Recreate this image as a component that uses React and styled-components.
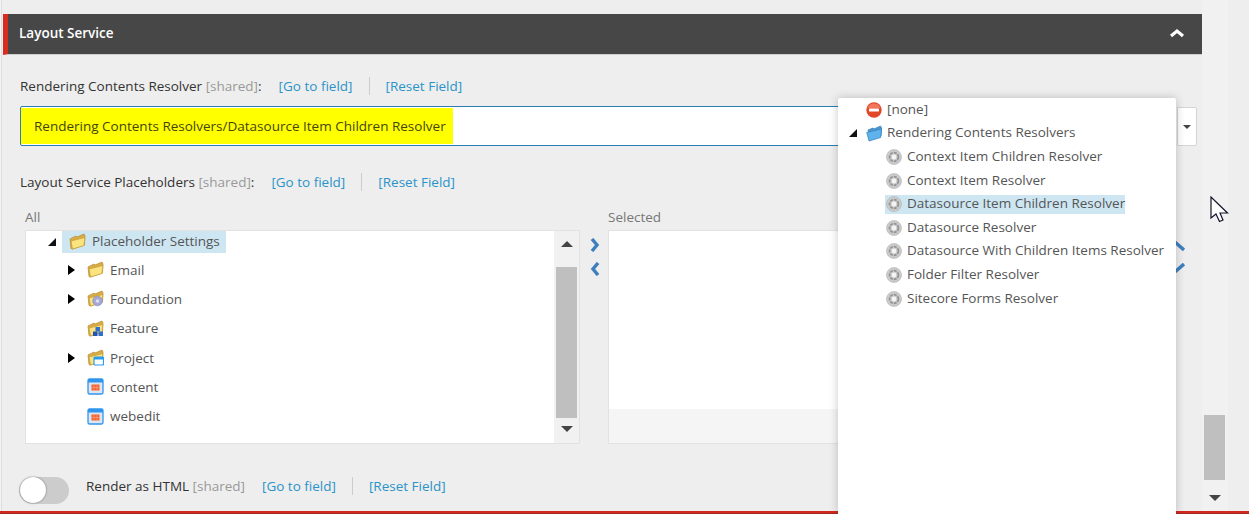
import React from "react";
import styled, { createGlobalStyle } from "styled-components";

const Global = createGlobalStyle`
  html, body { margin: 0; padding: 0; background: #eeeeee; }
  body { font-family: "Open Sans", "Liberation Sans", sans-serif; font-size: 13.5px; color: #333; }
`;

//layout
const Page = styled.div`
  position: relative;
  width: 1249px;
  height: 514px;
  overflow: hidden;
  background: #eeeeee;
  display: flex;
  flex-direction: column;
`;

const Main = styled.div`
  display: flex;
  height: 511px;
  flex-shrink: 0;
`;

const Gutter = styled.div`
  width: 2px;
  margin-right: 1px;
  background: #f3f3f3;
  border-right: 1px solid #dedede;
  box-sizing: border-box;
  flex-shrink: 0;
`;

const Panel = styled.div`
  width: 1199px;
  padding-top: 14px;
  flex-shrink: 0;
`;

const RedLine = styled.div`
  height: 3px;
  background: #d0281e;
  border-bottom: 1px solid #a92a22;
  box-sizing: border-box;
  flex-shrink: 0;
`;

//header
const Header = styled.div`
  height: 41px;
  box-sizing: border-box;
  background: #474747;
  border-left: 5px solid #d92c20;
  border-bottom: 1px solid #cfcfcf;
  padding: 0 17px 3px 11px;
  display: flex;
  align-items: center;
  justify-content: space-between;
`;

const Title = styled.div`
  color: #fff;
  font-weight: 600;
  font-size: 13.5px;
`;

const Body = styled.div`
  padding: 19px 5px 0 17px;
`;

//field rows
const FieldRow = styled.div`
  display: flex;
  align-items: center;
  height: 24px;
  margin-top: ${(p) => p.$top || 0}px;
`;

const Shared = styled.span`
  color: #999;
`;

const Label = styled.div`
  color: #333;
  white-space: nowrap;
  margin-right: 17px;
`;

const FieldLink = styled.a`
  color: #2a93c9;
  white-space: nowrap;
  cursor: pointer;
`;

const Divider = styled.span`
  width: 1px;
  height: 18px;
  background: #cccccc;
  margin: 0 16px;
`;

//select
const SelectRow = styled.div`
  display: flex;
  height: 40px;
  margin-top: 8px;
`;

const SelectInput = styled.div`
  width: 1156px;
  box-sizing: border-box;
  border: 1px solid #2b7db3;
  border-radius: 2px;
  background: #fff;
  padding: 1px 0 1px 0;
  display: flex;
`;

const Marked = styled.div`
  width: 432px;
  box-sizing: border-box;
  background: #ffff00;
  padding-left: 13px;
  line-height: 36px;
  color: #44440c;
  white-space: nowrap;
`;

const SelectButton = styled.div`
  width: 20px;
  margin: 1px 0 0 1px;
  box-sizing: border-box;
  border: 1px solid #d4d4d4;
  border-radius: 0 2px 2px 0;
  background: #fff;
  display: flex;
  align-items: center;
  justify-content: center;
`;

const Triangle = styled.span`
  display: block;
  flex-shrink: 0;
  width: 0;
  height: 0;
  border-left: ${(p) => p.$size}px solid transparent;
  border-right: ${(p) => p.$size}px solid transparent;
  ${(p) => (p.$up ? "border-bottom" : "border-top")}: ${(p) => p.$height}px solid ${(p) => p.$color || "#444"};
`;

//lists
const ListLabels = styled.div`
  display: flex;
  height: 20px;
  margin-top: 14px;
  margin-bottom: 2px;
  padding-left: 5px;
  color: #777;
`;

const AllLabel = styled.div`
  width: 583px;
`;

const Lists = styled.div`
  display: flex;
  height: 214px;
  padding-left: 5px;
`;

const ListBox = styled.div`
  width: 555px;
  box-sizing: border-box;
  border: 1px solid #e2e2e2;
  background: #fff;
  display: flex;
  justify-content: space-between;
`;

const Tree = styled.div`
  padding: 0 0 0 22px;
  color: #555;
`;

const ChildNodes = styled.div`
  padding: 2px 0 0 18px;
`;

const RootNode = styled.div`
  display: flex;
  align-items: center;
  height: 22px;
`;

const Node = styled.div`
  display: flex;
  align-items: center;
  height: 29.3px;
  white-space: nowrap;
`;

const Toggle = styled.span`
  width: ${(p) => p.$width}px;
  display: flex;
  flex-shrink: 0;
`;

const Expand = styled.span`
  display: block;
  margin-left: 2px;
  width: 0;
  height: 0;
  border-top: 5px solid transparent;
  border-bottom: 5px solid transparent;
  border-left: 7px solid #000;
`;

const Collapse = styled.span`
  display: block;
  width: 0;
  height: 0;
  border-left: 8px solid transparent;
  border-bottom: 8px solid #111;
`;

const Highlight = styled.div`
  display: flex;
  align-items: center;
  gap: 6px;
  height: 100%;
  box-sizing: border-box;
  background: #cde6f2;
  padding: 0 6px 2px 7px;
`;

const NodeText = styled.span`
  margin-left: 6px;
`;

const ListScroll = styled.div`
  width: 25px;
  background: #f1f1f1;
  display: flex;
  flex-direction: column;
  align-items: center;
  padding-top: 10px;
  box-sizing: border-box;
`;

const ListThumb = styled.div`
  width: 21px;
  height: 151px;
  margin: 20px 0 8px;
  background: #bfbfbf;
`;

const Shuttle = styled.div`
  width: 28px;
  display: flex;
  flex-direction: column;
  gap: 10px;
  padding-top: 8px;
  padding-left: 10px;
  box-sizing: border-box;
  flex-shrink: 0;
`;

const SelectedBox = styled.div`
  width: 557px;
  box-sizing: border-box;
  border: 1px solid #e2e2e2;
  background: #f5f5f5;
  flex-shrink: 0;
`;

const SelectedArea = styled.div`
  height: 178px;
  background: #fff;
`;

const OrderButtons = styled.div`
  display: flex;
  flex-direction: column;
  gap: 12px;
  padding: 11px 0 0 2px;
`;

//toggle row
const SwitchRow = styled.div`
  display: flex;
  align-items: flex-start;
  height: 27px;
  margin-top: 33px;
`;

const SwitchTrack = styled.div`
  width: 50px;
  height: 27px;
  margin-left: -1px;
  border-radius: 14px;
  background: #cccccc;
  margin-right: 17px;
  display: flex;
  align-items: flex-start;
`;

const SwitchKnob = styled.div`
  width: 26px;
  height: 26px;
  margin-left: 1px;
  border-radius: 50%;
  background: #fff;
  box-shadow: 0 0 2px rgba(0, 0, 0, 0.5);
`;

//page scrollbar
const PageScroll = styled.div`
  width: 26px;
  background: #f1f1f1;
  display: flex;
  flex-direction: column;
  align-items: center;
  justify-content: flex-end;
  padding: 0 1px 10px 0;
  box-sizing: border-box;
  flex-shrink: 0;
`;

const PageThumb = styled.div`
  width: 21px;
  height: 65px;
  background: #bfbfbf;
  margin-bottom: 15px;
`;

//dropdown
const Dropdown = styled.div`
  position: absolute;
  left: 838px;
  top: 98px;
  width: 338px;
  height: 416px;
  box-sizing: border-box;
  background: #fff;
  border-radius: 2px 2px 0 0;
  box-shadow: 0 0 10px rgba(0, 0, 0, 0.22);
  padding-left: 11px;
  color: #555;
`;

const DropRow = styled.div`
  display: flex;
  align-items: center;
  height: 23.6px;
  padding-left: ${(p) => p.$indent}px;
  white-space: nowrap;
`;

const DropText = styled.span`
  margin-left: 5px;
  padding-bottom: 2px;
`;

const DropActive = styled.div`
  display: flex;
  align-items: center;
  height: 19px;
  background: #cde6f2;
  margin-left: -1px;
  padding-left: 1px;
`;

const Cursor = styled.svg`
  position: absolute;
  left: 1210px;
  top: 196px;
`;

//icons
const Icon = styled.svg`
  display: block;
  flex-shrink: 0;
`;

const FolderBase = ({ children }) => (
  <Icon width="17" height="17" viewBox="0 0 17 17">
    <path d="M1 6 L7 3 L8 4 L15 1 L16 3 L15.5 12 L3.5 16 L2 15.5 Z" fill="#d9ad45" stroke="#b58a2c" strokeWidth=".7" />
    <path d="M2 8 L15.8 4.5 L15 12.5 L3.5 16 Z" fill="#fbe37f" stroke="#c69c38" strokeWidth=".7" />
    {children}
  </Icon>
);

const GearFolder = () => (
  <FolderBase>
    <circle cx="10.5" cy="11" r="4.8" fill="#a5a8d4" stroke="#8588b5" strokeWidth=".6" />
    <circle cx="10.5" cy="11" r="1.8" fill="#dcdef0" />
  </FolderBase>
);

const BlocksFolder = () => (
  <FolderBase>
    <rect x="8.5" y="7" width="4.5" height="4.5" fill="#2f6fd0" />
    <rect x="6" y="11.5" width="4.5" height="4.5" fill="#1d56b5" />
    <rect x="11.5" y="11.5" width="4.5" height="4.5" fill="#2f6fd0" />
  </FolderBase>
);

const WindowFolder = () => (
  <FolderBase>
    <rect x="7" y="8" width="9.5" height="8" rx="1" fill="#fff" stroke="#2b9cf0" strokeWidth="1.2" />
    <rect x="7" y="8" width="9.5" height="2.5" fill="#2b9cf0" />
  </FolderBase>
);

const GridPage = () => (
  <Icon width="17" height="17" viewBox="0 0 17 17">
    <rect x="1" y="1" width="15" height="15" rx="1.5" fill="#dde6f0" stroke="#2f95ee" strokeWidth="1.3" />
    <rect x="1" y="1" width="15" height="3.5" fill="#2f95ee" />
    <rect x="4.5" y="6.5" width="8" height="6" fill="#f2622e" />
    <path d="M7 6.5 V12.5 M10 6.5 V12.5 M4.5 9.5 H12.5" stroke="#f9a98a" strokeWidth=".6" />
  </Icon>
);

const NoneIcon = () => (
  <Icon width="16" height="16" viewBox="0 0 16 16">
    <circle cx="8" cy="8" r="7.7" fill="#e3472a" />
    <path d="M1.5 6 A7 7 0 0 1 14.5 6 Z" fill="#f0785a" />
    <rect x="3" y="6.4" width="10" height="3.2" rx=".6" fill="#fff" />
  </Icon>
);

const BlueFolder = () => (
  <Icon width="16" height="17" viewBox="0 0 16 17">
    <path d="M2 5 L7 3 L8 4 L14.5 1 L15.5 3 L15 11 L4 15 Z" fill="#4d97cf" stroke="#2f78b5" strokeWidth=".7" />
    <path d="M0.7 7.5 L15.5 4 L14.7 12.5 L3 16 Z" fill="#5fb3ea" stroke="#2e82c4" strokeWidth=".7" />
  </Icon>
);

const GearIcon = () => (
  <Icon width="16" height="16" viewBox="0 0 16 16">
    <circle cx="8" cy="8" r="7.5" fill="#cbcbcb" stroke="#b0b0b0" strokeWidth=".6" />
    <circle cx="8" cy="8" r="4.4" fill="none" stroke="#949494" strokeWidth="1.8" strokeDasharray="3 1" />
    <circle cx="8" cy="8" r="2.4" fill="#f4f4f4" />
  </Icon>
);

const Chevron = ({ d, width = 10, height = 14 }) => (
  <Icon width={width} height={height} viewBox={`0 0 ${width} ${height}`}>
    <path d={d} fill="none" stroke="#3f7fbd" strokeWidth="3.4" />
  </Icon>
);

const CollapseIcon = () => (
  <Icon width="16" height="10" viewBox="0 0 16 10">
    <path d="M2 8 L8 3 L14 8" fill="none" stroke="#fff" strokeWidth="3.2" />
  </Icon>
);

const treeItems = [
  { name: "Email", icon: <FolderBase />, open: true },
  { name: "Foundation", icon: <GearFolder />, open: true },
  { name: "Feature", icon: <BlocksFolder /> },
  { name: "Project", icon: <WindowFolder />, open: true },
  { name: "content", icon: <GridPage /> },
  { name: "webedit", icon: <GridPage /> },
];

const resolvers = [
  "Context Item Children Resolver",
  "Context Item Resolver",
  "Datasource Item Children Resolver",
  "Datasource Resolver",
  "Datasource With Children Items Resolver",
  "Folder Filter Resolver",
  "Sitecore Forms Resolver",
];

const FieldLinks = () => (
  <>
    <FieldLink>[Go to field]</FieldLink>
    <Divider />
    <FieldLink>[Reset Field]</FieldLink>
  </>
);

export default function App() {
  return (
    <Page>
      <Global />
      <Main>
        <Gutter />
        <Panel>
          <Header>
            <Title>Layout Service</Title>
            <CollapseIcon />
          </Header>
          <Body>
            <FieldRow>
              <Label>
                Rendering Contents Resolver <Shared>[shared]</Shared>:
              </Label>
              <FieldLinks />
            </FieldRow>
            <SelectRow>
              <SelectInput>
                <Marked>Rendering Contents Resolvers/Datasource Item Children Resolver</Marked>
              </SelectInput>
              <SelectButton>
                <Triangle $size={4} $height={4} />
              </SelectButton>
            </SelectRow>
            <FieldRow $top={24}>
              <Label>
                Layout Service Placeholders <Shared>[shared]</Shared>:
              </Label>
              <FieldLinks />
            </FieldRow>
            <ListLabels>
              <AllLabel>All</AllLabel>
              <div>Selected</div>
            </ListLabels>
            <Lists>
              <ListBox>
                <Tree>
                  <RootNode>
                    <Toggle $width={14}>
                      <Collapse />
                    </Toggle>
                    <Highlight>
                      <FolderBase />
                      Placeholder Settings
                    </Highlight>
                  </RootNode>
                  <ChildNodes>
                    {treeItems.map((item) => (
                      <Node key={item.name}>
                        <Toggle $width={21}>{item.open && <Expand />}</Toggle>
                        {item.icon}
                        <NodeText>{item.name}</NodeText>
                      </Node>
                    ))}
                  </ChildNodes>
                </Tree>
                <ListScroll>
                  <Triangle $up $size={6} $height={6} />
                  <ListThumb />
                  <Triangle $size={6} $height={6} />
                </ListScroll>
              </ListBox>
              <Shuttle>
                <Chevron d="M2 1 L7 7 L2 13" />
                <Chevron d="M8 1 L3 7 L8 13" />
              </Shuttle>
              <SelectedBox>
                <SelectedArea />
              </SelectedBox>
              <OrderButtons>
                <Chevron d="M1 9 L9 2 L17 9" width={18} height={10} />
                <Chevron d="M1 1 L9 8 L17 1" width={18} height={10} />
              </OrderButtons>
            </Lists>
            <SwitchRow>
              <SwitchTrack>
                <SwitchKnob />
              </SwitchTrack>
              <FieldRow $top={-3}>
                <Label>
                  Render as HTML <Shared>[shared]</Shared>
                </Label>
                <FieldLinks />
              </FieldRow>
            </SwitchRow>
          </Body>
        </Panel>
        <PageScroll>
          <PageThumb />
          <Triangle $size={6} $height={6} />
        </PageScroll>
      </Main>
      <RedLine />
      <Dropdown>
        <DropRow $indent={17}>
          <NoneIcon />
          <DropText>[none]</DropText>
        </DropRow>
        <DropRow $indent={0}>
          <Toggle $width={17}>
            <Collapse />
          </Toggle>
          <BlueFolder />
          <DropText>Rendering Contents Resolvers</DropText>
        </DropRow>
        {resolvers.map((name, i) =>
          i === 2 ? (
            <DropRow key={name} $indent={37}>
              <DropActive>
                <GearIcon />
                <DropText>{name}</DropText>
              </DropActive>
            </DropRow>
          ) : (
            <DropRow key={name} $indent={37}>
              <GearIcon />
              <DropText>{name}</DropText>
            </DropRow>
          )
        )}
      </Dropdown>
      <Cursor width="19" height="27" viewBox="0 0 19 27">
        <path d="M1 1 L1 22 L6 18 L9.5 25.5 L13 24 L10 17 L17.5 17 Z" fill="#fff" stroke="#14142a" strokeWidth="1.2" />
      </Cursor>
    </Page>
  );
}
